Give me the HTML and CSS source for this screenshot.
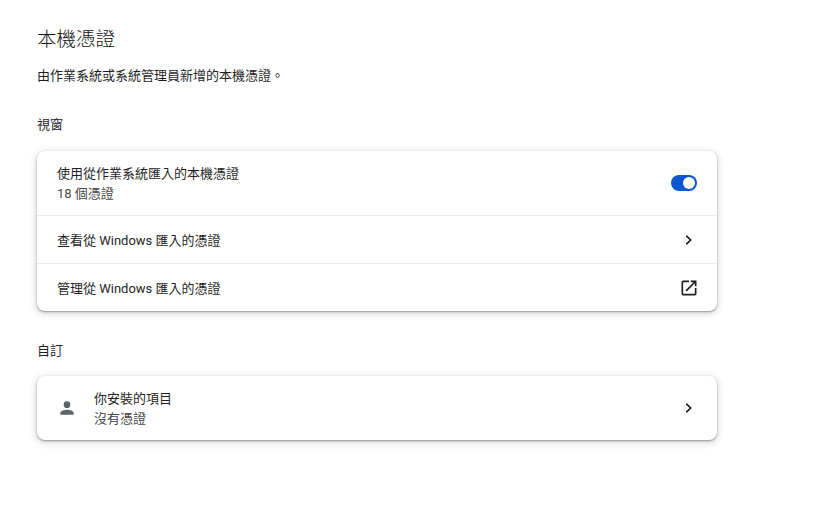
FILE: index.html
```html
<!DOCTYPE html>
<html lang="zh-Hant">
<head>
<meta charset="utf-8">
<title>本機憑證</title>
<link rel="stylesheet" href="styles.css">
</head>
<body>
<main class="page">
  <h1 class="title">本機憑證</h1>
  <p class="desc">由作業系統或系統管理員新增的本機憑證。</p>
  <h2 class="section">視窗</h2>
  <section class="card">
    <div class="row row-tall">
      <div class="text">
        <div class="primary">使用從作業系統匯入的本機憑證</div>
        <div class="secondary">18 個憑證</div>
      </div>
      <span class="toggle"><span class="knob"></span></span>
    </div>
    <div class="row row-line">
      <div class="text">
        <div class="primary">查看從 Windows 匯入的憑證</div>
      </div>
      <svg class="icon" viewBox="0 0 24 24" width="20" height="20"><path d="M9.4 6 8 7.4 12.6 12 8 16.6 9.4 18l6-6z"/></svg>
    </div>
    <div class="row row-line">
      <div class="text">
        <div class="primary">管理從 Windows 匯入的憑證</div>
      </div>
      <svg class="icon" viewBox="0 0 24 24" width="20" height="20"><path d="M19 19H5V5h7V3H5a2 2 0 0 0-2 2v14a2 2 0 0 0 2 2h14a2 2 0 0 0 2-2v-7h-2v7zM14 3v2h3.6l-9.8 9.8 1.4 1.4L19 6.4V10h2V3h-7z"/></svg>
    </div>
  </section>
  <h2 class="section section-2">自訂</h2>
  <section class="card">
    <div class="row row-tall">
      <svg class="person" viewBox="0 0 24 24" width="20" height="20"><path d="M12 12a4 4 0 1 0 0-8 4 4 0 0 0 0 8zm0 2c-2.7 0-8 1.3-8 4v2h16v-2c0-2.7-5.3-4-8-4z"/></svg>
      <div class="text">
        <div class="primary">你安裝的項目</div>
        <div class="secondary">沒有憑證</div>
      </div>
      <svg class="icon" viewBox="0 0 24 24" width="20" height="20"><path d="M9.4 6 8 7.4 12.6 12 8 16.6 9.4 18l6-6z"/></svg>
    </div>
  </section>
</main>
</body>
</html>
```
FILE: styles.css
```css
* { box-sizing: border-box; }
html, body { margin: 0; background: #fff; }
body {
  font-family: Roboto, "Noto Sans CJK TC", sans-serif;
  color: #1f1f1f;
  font-size: 13px;
  height: 517px;
  overflow: hidden;
}
.page { width: 680px; margin-left: 37px; padding-top: 27px; }
.title { margin: 0; font-size: 19.5px; font-weight: 300; line-height: 26px; color: #111; }
.desc { margin: 13px 0 0; line-height: 20px; }
.section { margin: 29px 0 16px; font-size: 13px; font-weight: 400; line-height: 20px; }
.section-2 { margin: 30px 0 15px; }
.card {
  background: #fff;
  border-radius: 8px;
  box-shadow: 0 1px 2px rgba(60, 64, 67, .5), 0 2px 6px 2px rgba(60, 64, 67, .15);
}
.row { display: flex; align-items: center; justify-content: space-between; padding: 0 20px; height: 48px; }
.row-tall { height: 64px; }
.row-line { border-top: 1px solid #ebebeb; }
.text { flex: 1; margin-top: 2px; }
.primary { line-height: 20px; }
.secondary { line-height: 20px; color: #474747; }
.icon { fill: #1f1f1f; display: block; flex: none; margin-right: -2px; }
.person { fill: #5f6368; flex: none; margin-right: 17px; display: block; }
.toggle { position: relative; display: block; width: 26px; height: 16px; border-radius: 8px; background: #0b57d0; flex: none; }
.knob { position: absolute; top: 2px; right: 2px; width: 12px; height: 12px; border-radius: 50%; background: #fff; }
```
